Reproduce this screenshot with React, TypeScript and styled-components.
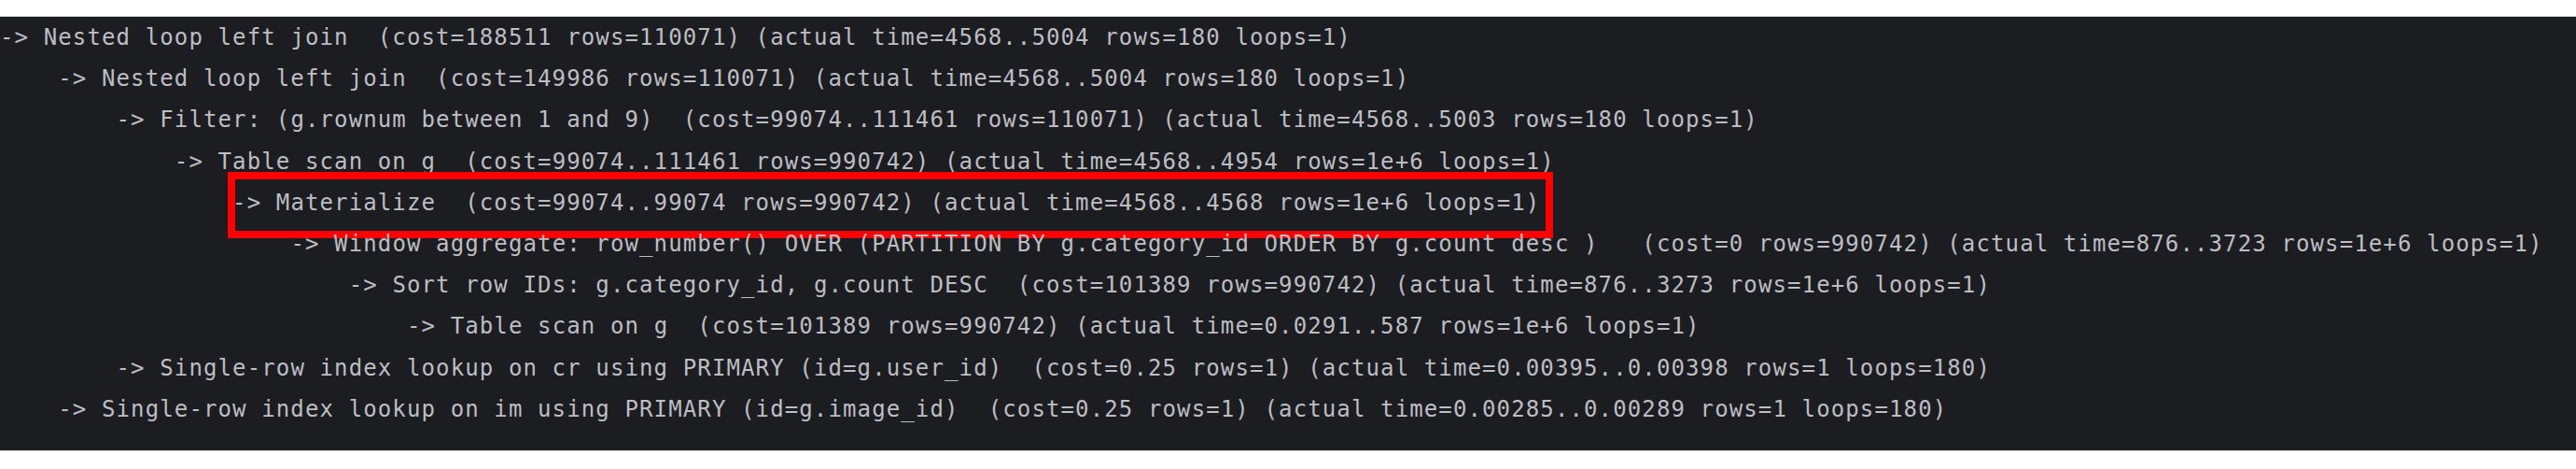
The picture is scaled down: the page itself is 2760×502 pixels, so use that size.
import React from "react";
import styled, { createGlobalStyle } from "styled-components";

const CHAR = 15.57;

const GlobalStyle = createGlobalStyle`
  html, body {
    margin: 0;
    padding: 0;
    background: #ffffff;
  }
  #root {
    width: 2760px;
  }
`;

const Page = styled.div`
  padding: 17px 0 18px;
  background: #ffffff;
`;

const Console = styled.div`
  background: #1c1d20;
  border-top: 1px solid #d6d6d6;
  border-bottom: 1px solid #d6d6d6;
  padding: 0 0 22px;
  overflow: hidden;
`;

const Line = styled.div<{ $indent: number }>`
  position: relative;
  height: 44.2px;
  line-height: 44.2px;
  padding-left: ${(p) => p.$indent * CHAR}px;
  font-family: "DejaVu Sans Mono", "Liberation Mono", monospace;
  font-size: 24px;
  letter-spacing: 1.12px;
  color: #bcbec4;
  white-space: pre;
`;

const Highlight = styled.div`
  position: absolute;
  left: 244px;
  top: -10.8px;
  width: 1420px;
  height: 71px;
  box-sizing: border-box;
  border: 8px solid #ff0000;
  pointer-events: none;
`;

type PlanLine = { indent: number; text: string; marked?: boolean };

const lines: PlanLine[] = [
  {
    indent: 0,
    text: "-> Nested loop left join  (cost=188511 rows=110071) (actual time=4568..5004 rows=180 loops=1)",
  },
  {
    indent: 4,
    text: "-> Nested loop left join  (cost=149986 rows=110071) (actual time=4568..5004 rows=180 loops=1)",
  },
  {
    indent: 8,
    text: "-> Filter: (g.rownum between 1 and 9)  (cost=99074..111461 rows=110071) (actual time=4568..5003 rows=180 loops=1)",
  },
  {
    indent: 12,
    text: "-> Table scan on g  (cost=99074..111461 rows=990742) (actual time=4568..4954 rows=1e+6 loops=1)",
  },
  {
    indent: 16,
    text: "-> Materialize  (cost=99074..99074 rows=990742) (actual time=4568..4568 rows=1e+6 loops=1)",
    marked: true,
  },
  {
    indent: 20,
    text: "-> Window aggregate: row_number() OVER (PARTITION BY g.category_id ORDER BY g.count desc )   (cost=0 rows=990742) (actual time=876..3723 rows=1e+6 loops=1)",
  },
  {
    indent: 24,
    text: "-> Sort row IDs: g.category_id, g.count DESC  (cost=101389 rows=990742) (actual time=876..3273 rows=1e+6 loops=1)",
  },
  {
    indent: 28,
    text: "-> Table scan on g  (cost=101389 rows=990742) (actual time=0.0291..587 rows=1e+6 loops=1)",
  },
  {
    indent: 8,
    text: "-> Single-row index lookup on cr using PRIMARY (id=g.user_id)  (cost=0.25 rows=1) (actual time=0.00395..0.00398 rows=1 loops=180)",
  },
  {
    indent: 4,
    text: "-> Single-row index lookup on im using PRIMARY (id=g.image_id)  (cost=0.25 rows=1) (actual time=0.00285..0.00289 rows=1 loops=180)",
  },
];

export default function App() {
  return (
    <>
      <GlobalStyle />
      <Page>
        <Console>
          {lines.map((l, i) => (
            <Line key={i} $indent={l.indent}>
              {l.text}
              {l.marked && <Highlight />}
            </Line>
          ))}
        </Console>
      </Page>
    </>
  );
}
